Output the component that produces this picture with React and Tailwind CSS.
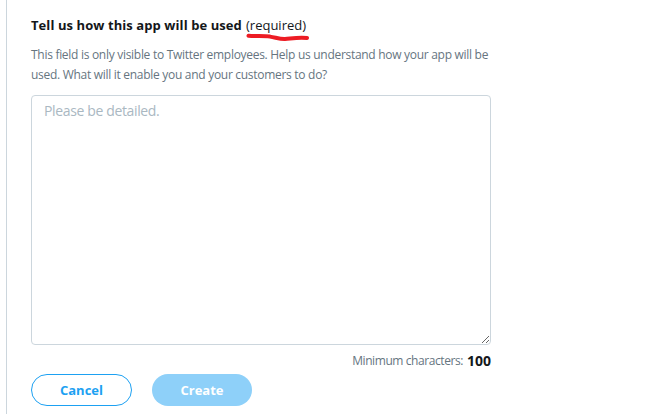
export default function App() {
  return (
    <div className="h-[414px] w-[654px] overflow-hidden bg-white pl-[6px] font-['Open_Sans','Noto_Sans',sans-serif]">
      <main className="h-full border-l border-[#ccd6dd] pl-6 pt-[15px]">
        <form className="w-[460px]">
          <label htmlFor="usage" className="flex h-5 items-center whitespace-nowrap text-[13px] leading-5 text-[#14171a]">
            <span className="w-[215px] font-bold tracking-[0.08px]">Tell us how this app will be used</span>
            <span className="relative">
              (required)
              <svg className="absolute -left-px top-[17px]" width="66" height="12" viewBox="0 0 66 12" fill="none">
                <path d="M3.5 3.8C10 4.5 18 3.6 25 4.6C31 5.6 35 7.2 40 7C47 6.4 54 5 62 6" stroke="#ed1c24" strokeWidth="4" strokeLinecap="round" />
              </svg>
            </span>
          </label>
          <p className="mt-[10px] whitespace-nowrap text-[12px] leading-5 tracking-[-0.29px] text-[#66757f]">
            This field is only visible to Twitter employees. Help us understand how your app will be
            <br />
            used. What will it enable you and your customers to do?
          </p>
          <textarea
            id="usage"
            placeholder="Please be detailed."
            className="mt-[10px] block h-[250px] w-[460px] resize rounded-[4px] border border-[#ccd6dd] bg-white px-3 py-[5px] text-[14px] leading-5 tracking-[-0.36px] placeholder:text-[#aab8c2]"
          />
          <div className="mt-[6px] flex h-5 items-center justify-end gap-1 whitespace-nowrap leading-5">
            <span className="text-[12px] tracking-[-0.42px] text-[#66757f]">Minimum characters:</span>
            <span className="text-[14px] font-bold text-[#14171a]">100</span>
          </div>
          <div className="mt-[3px] flex gap-5 text-[13px] font-bold">
            <button type="button" className="h-8 w-[101px] rounded-full border border-[#1da1f2] pt-px text-[#1da1f2]">Cancel</button>
            <button type="button" className="h-8 w-[100px] rounded-full bg-[#8ed0f9] pt-0.5 text-white">Create</button>
          </div>
        </form>
      </main>
    </div>
  );
}
